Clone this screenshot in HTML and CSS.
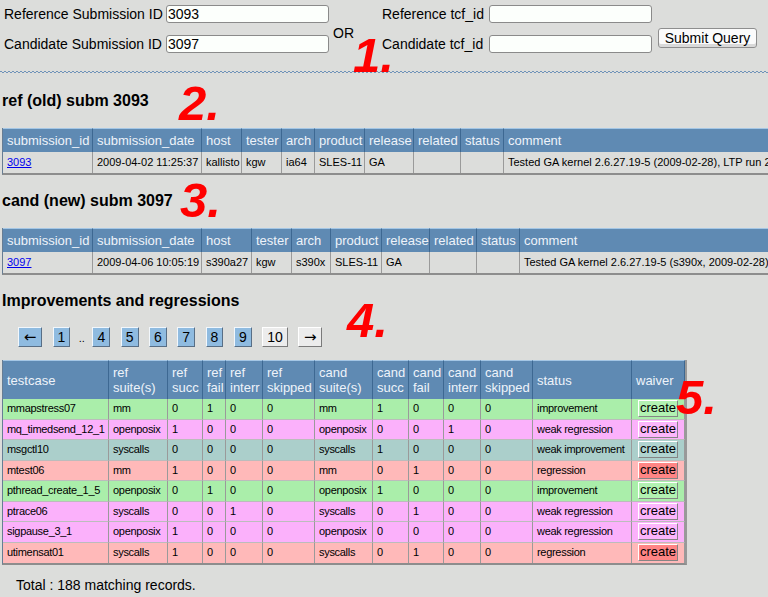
FILE: index.html
```html
<!DOCTYPE html>
<html>
<head>
<meta charset="utf-8">
<title>Submission compare</title>
<link rel="stylesheet" href="styles.css">
</head>
<body>
<form class="query">
  <label class="lbl" for="rs">Reference Submission ID</label>
  <input class="field" id="rs" type="text" value="3093">
  <label class="lbl" for="rt">Reference tcf_id</label>
  <input class="field" id="rt" type="text" value="">
  <label class="lbl" for="cs">Candidate Submission ID</label>
  <input class="field" id="cs" type="text" value="3097">
  <label class="lbl" for="ct">Candidate tcf_id</label>
  <input class="field" id="ct" type="text" value="">
  <span class="or">OR</span>
  <button class="submit" type="button">Submit Query</button>
</form>
<div class="wave"></div>

<h2 class="sect sect-ref">ref (old) subm 3093</h2>
<table class="tbl subm subm-ref">
  <colgroup>
    <col class="c-id"><col class="c-date"><col class="c-host"><col class="c-tester"><col class="c-arch"><col class="c-product"><col class="c-release"><col class="c-related"><col class="c-status"><col class="c-comment">
  </colgroup>
  <tr class="head">
    <th>submission_id</th><th>submission_date</th><th>host</th><th>tester</th><th>arch</th><th>product</th><th>release</th><th>related</th><th>status</th><th>comment</th>
  </tr>
  <tr class="row">
    <td><a class="sublink" href="#">3093</a></td><td>2009-04-02 11:25:37</td><td>kallisto</td><td>kgw</td><td>ia64</td><td>SLES-11</td><td>GA</td><td></td><td></td><td>Tested GA kernel 2.6.27.19-5 (2009-02-28), LTP run 20090331</td>
  </tr>
</table>

<h2 class="sect sect-cand">cand (new) subm 3097</h2>
<table class="tbl subm subm-cand">
  <colgroup>
    <col class="c-id"><col class="c-date"><col class="c-host2"><col class="c-tester"><col class="c-arch2"><col class="c-product2"><col class="c-release2"><col class="c-related"><col class="c-status"><col class="c-comment">
  </colgroup>
  <tr class="head">
    <th>submission_id</th><th>submission_date</th><th>host</th><th>tester</th><th>arch</th><th>product</th><th>release</th><th>related</th><th>status</th><th>comment</th>
  </tr>
  <tr class="row">
    <td><a class="sublink" href="#">3097</a></td><td>2009-04-06 10:05:19</td><td>s390a27</td><td>kgw</td><td>s390x</td><td>SLES-11</td><td>GA</td><td></td><td></td><td>Tested GA kernel 2.6.27.19-5 (s390x, 2009-02-28), LTP run 20090331</td>
  </tr>
</table>

<h2 class="sect sect-imp">Improvements and regressions</h2>
<div class="pager">
  <a class="pg pg-arrow" href="#">&larr;</a>
  <a class="pg" href="#">1</a>
  <span class="dots">..</span>
  <a class="pg" href="#">4</a>
  <a class="pg" href="#">5</a>
  <a class="pg" href="#">6</a>
  <a class="pg" href="#">7</a>
  <a class="pg" href="#">8</a>
  <a class="pg" href="#">9</a>
  <span class="pg pg-current">10</span>
  <a class="pg pg-arrow pg-plain" href="#">&rarr;</a>
</div>

<table class="tbl regs">
  <colgroup>
    <col class="k-test"><col class="k-suite"><col class="k-succ"><col class="k-fail"><col class="k-interr"><col class="k-skip"><col class="k-csuite"><col class="k-csucc"><col class="k-fail2"><col class="k-interr"><col class="k-skip"><col class="k-status"><col class="k-waiver">
  </colgroup>
  <tr class="head">
    <th>testcase</th><th>ref<br>suite(s)</th><th>ref<br>succ</th><th>ref<br>fail</th><th>ref<br>interr</th><th>ref<br>skipped</th><th>cand<br>suite(s)</th><th>cand<br>succ</th><th>cand<br>fail</th><th>cand<br>interr</th><th>cand<br>skipped</th><th>status</th><th>waiver</th>
  </tr>
  <tr class="row r-imp">
    <td>mmapstress07</td><td>mm</td><td>0</td><td>1</td><td>0</td><td>0</td><td>mm</td><td>1</td><td>0</td><td>0</td><td>0</td><td>improvement</td><td class="wv"><button class="create" type="button">create</button></td>
  </tr>
  <tr class="row r-wreg">
    <td>mq_timedsend_12_1</td><td>openposix</td><td>1</td><td>0</td><td>0</td><td>0</td><td>openposix</td><td>0</td><td>0</td><td>1</td><td>0</td><td>weak regression</td><td class="wv"><button class="create" type="button">create</button></td>
  </tr>
  <tr class="row r-wimp">
    <td>msgctl10</td><td>syscalls</td><td>0</td><td>0</td><td>0</td><td>0</td><td>syscalls</td><td>1</td><td>0</td><td>0</td><td>0</td><td>weak improvement</td><td class="wv"><button class="create" type="button">create</button></td>
  </tr>
  <tr class="row r-reg">
    <td>mtest06</td><td>mm</td><td>1</td><td>0</td><td>0</td><td>0</td><td>mm</td><td>0</td><td>1</td><td>0</td><td>0</td><td>regression</td><td class="wv"><button class="create" type="button">create</button></td>
  </tr>
  <tr class="row r-imp">
    <td>pthread_create_1_5</td><td>openposix</td><td>0</td><td>1</td><td>0</td><td>0</td><td>openposix</td><td>1</td><td>0</td><td>0</td><td>0</td><td>improvement</td><td class="wv"><button class="create" type="button">create</button></td>
  </tr>
  <tr class="row r-wreg">
    <td>ptrace06</td><td>syscalls</td><td>0</td><td>0</td><td>1</td><td>0</td><td>syscalls</td><td>0</td><td>1</td><td>0</td><td>0</td><td>weak regression</td><td class="wv"><button class="create" type="button">create</button></td>
  </tr>
  <tr class="row r-wreg">
    <td>sigpause_3_1</td><td>openposix</td><td>1</td><td>0</td><td>0</td><td>0</td><td>openposix</td><td>0</td><td>0</td><td>0</td><td>0</td><td>weak regression</td><td class="wv"><button class="create" type="button">create</button></td>
  </tr>
  <tr class="row r-reg">
    <td>utimensat01</td><td>syscalls</td><td>1</td><td>0</td><td>0</td><td>0</td><td>syscalls</td><td>0</td><td>1</td><td>0</td><td>0</td><td>regression</td><td class="wv"><button class="create" type="button">create</button></td>
  </tr>
</table>

<p class="total">Total : 188 matching records.</p>

<span class="mark m1">1.</span>
<span class="mark m2">2.</span>
<span class="mark m3">3.</span>
<span class="mark m4">4.</span>
<span class="mark m5">5.</span>
</body>
</html>
```
FILE: styles.css
```css
html {
  overflow: hidden;
}

body {
  margin: 0;
  padding: 0 2px;
  min-height: 597px;
  position: relative;
  background: #dcdddb;
  color: #000;
  font-family: "Liberation Sans", Arial, sans-serif;
}

/* ---------- query form ---------- */
.query {
  display: grid;
  grid-template-columns: 162px 163px 53px 107px 163px auto;
  grid-template-rows: 18px 18px;
  row-gap: 12px;
  align-items: center;
  justify-items: start;
  margin: 0;
  padding: 5px 0 0 2px;
  font-size: 14px;
}

.lbl {
  white-space: nowrap;
  line-height: 16px;
}

.field {
  width: 163px;
  height: 18px;
  box-sizing: border-box;
  margin: 0;
  padding: 0 1px;
  border: 1px solid #8a8a8a;
  border-radius: 3px;
  background: #fcfffc;
  font: 14px "Liberation Sans", Arial, sans-serif;
  color: #000;
}

.or {
  grid-column: 3;
  grid-row: 1 / 3;
  align-self: start;
  margin-top: 20px;
  padding-left: 4px;
  line-height: 16px;
}

.submit {
  grid-column: 6;
  grid-row: 1 / 3;
  align-self: start;
  margin: 23px 0 0 6px;
  width: 99px;
  height: 20px;
  box-sizing: border-box;
  padding: 0;
  border: 1px solid #8e8e8e;
  border-radius: 3px;
  background: #fbfbfb;
  box-shadow: inset 0 -3px 0 #d9d9d9;
  font: 14px "Liberation Sans", Arial, sans-serif;
  color: #000;
  line-height: 16px;
}

.wave {
  height: 2px;
  margin: 18px -2px 0;
  background:
    linear-gradient(90deg, #6f92b8 50%, transparent 50%) 0 0 / 4px 1px repeat-x,
    linear-gradient(90deg, transparent 50%, #6f92b8 50%) 0 1px / 4px 1px repeat-x;
}

/* ---------- headings ---------- */
.sect {
  margin: 0;
  font-size: 16px;
  font-weight: bold;
  line-height: 18px;
}

.sect-ref { margin-top: 19px; }
.sect-cand { margin-top: 17px; }
.sect-imp { margin-top: 17.5px; }

/* ---------- tables ---------- */
.tbl {
  border-collapse: separate;
  border-spacing: 0;
  table-layout: fixed;
  border-left: 1px solid #667d94;
  border-bottom: 2px solid #8d8d8d;
  font-family: "Liberation Sans", Arial, sans-serif;
}

.tbl th {
  padding: 0 4px;
  background: #5f8ab3;
  color: #eef3fa;
  font-size: 13px;
  font-weight: normal;
  text-align: left;
  line-height: 15px;
  border-top: 1px solid #a4c6e5;
  border-right: 1px solid #3d6892;
  white-space: nowrap;
  overflow: hidden;
}

.tbl td {
  padding: 0 4px;
  font-size: 11px;
  line-height: 13px;
  border-right: 1px solid #9a9a9a;
  white-space: nowrap;
  overflow: hidden;
}

.subm { margin-top: 18px; }
.subm-ref { width: 841px; }
.subm-cand { width: 857px; }
.subm-cand { margin-top: 18.5px; }

.subm .head { height: 24px; }
.subm .row { height: 20.5px; }

.sublink {
  color: #0000ee;
  text-decoration: underline;
}

.c-id { width: 90px; }
.c-date { width: 109px; }
.c-host { width: 40px; }
.c-host2 { width: 50px; }
.c-tester { width: 40px; }
.c-arch { width: 33px; }
.c-arch2 { width: 39px; }
.c-product { width: 50px; }
.c-product2 { width: 51px; }
.c-release { width: 49px; }
.c-release2 { width: 48px; }
.c-related { width: 47px; }
.c-status { width: 43px; }
.c-comment { width: 340px; }

/* ---------- pager ---------- */
.pager {
  display: flex;
  align-items: baseline;
  gap: 10.5px;
  margin-top: 17px;
  padding-left: 16px;
  font-size: 14px;
}

.pg {
  display: block;
  height: 20px;
  box-sizing: border-box;
  padding: 0 4px;
  line-height: 18px;
  border: 1px solid;
  border-color: #f2f7fc #586e85 #586e85 #f2f7fc;
  background: #8fbbe0;
  color: #000;
  text-decoration: none;
}

.pg-arrow {
  width: 24px;
  padding: 0;
  text-align: center;
  font-family: "DejaVu Sans", sans-serif;
  font-size: 15px;
}

.pg-current,
.pg-plain {
  background: #ececec;
  border-color: #ffffff #7a7a7a #7a7a7a #ffffff;
}

.dots {
  font-size: 11px;
  margin: 0 -3px 0 -2px;
}

/* ---------- regressions table ---------- */
.regs {
  margin-top: 13px;
  width: 683px;
  border-right: 2px solid #999;
}

.regs td {
  letter-spacing: -0.3px;
}

.regs .head { height: 39px; }
.regs .row { height: 20.5px; }

.regs .row td {
  border-bottom: 1px solid #bcbcbc;
}

.regs .row:last-child td {
  border-bottom: 0;
}

.k-test { width: 106px; }
.k-suite { width: 59px; }
.k-succ { width: 35px; }
.k-fail { width: 23px; }
.k-interr { width: 37px; }
.k-skip { width: 52px; }
.k-csuite { width: 58px; }
.k-csucc { width: 36px; }
.k-fail2 { width: 35px; }
.k-status { width: 99px; }
.k-waiver { width: 53px; }

.r-imp td { background: #aaeeaa; }
.r-wreg td { background: #fbb1fb; }
.r-wimp td { background: #abcfcb; }
.r-reg td { background: #ffb9b9; }

.regs td.wv {
  padding-left: 6px;
}

.create {
  display: block;
  width: 40px;
  height: 17px;
  box-sizing: border-box;
  padding: 0 0 1px;
  border-style: solid;
  border-width: 1px;
  border-color: #ffffff #858585 #858585 #ffffff;
  font: 13px "Liberation Sans", Arial, sans-serif;
  line-height: 14px;
  letter-spacing: 0;
  color: #000;
}

.r-imp .create { background: #b2f2b2; }
.r-wreg .create { background: #fcb6fc; }
.r-wimp .create { background: #b0d4d0; }
.r-reg .create { background: #ff8585; }

.total {
  margin: 12px 0 0;
  padding-left: 14px;
  font-size: 14px;
  line-height: 16px;
}

/* ---------- red annotation numbers ---------- */
.mark {
  position: absolute;
  font: italic bold 49px/49px "Liberation Sans", Arial, sans-serif;
  color: #ff0000;
  white-space: nowrap;
}

.m1 { left: 353px; top: 31px; }
.m2 { left: 179px; top: 79px; }
.m3 { left: 180px; top: 176px; }
.m4 { left: 347px; top: 296px; }
.m5 { left: 676px; top: 373px; }
```
